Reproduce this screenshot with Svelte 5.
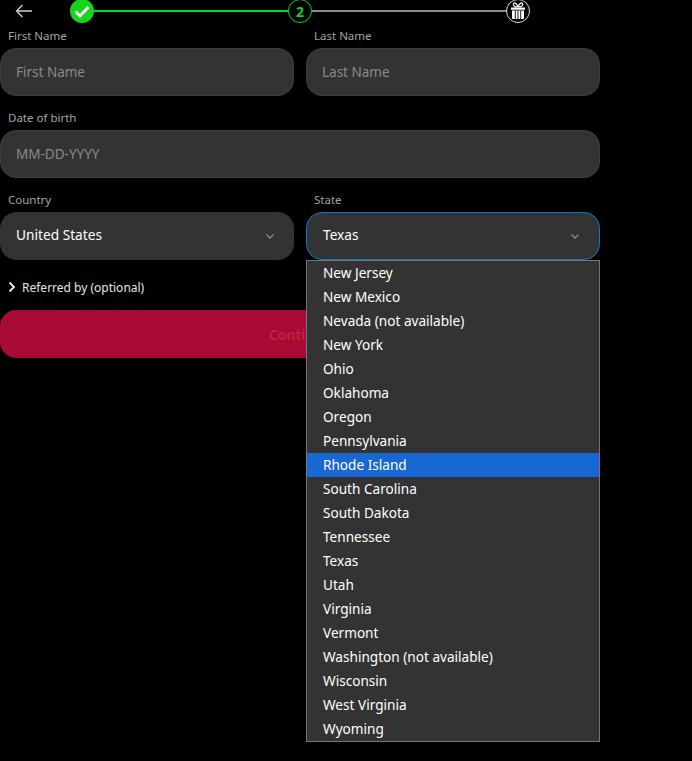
<script>
  const states = ['New Jersey','New Mexico','Nevada (not available)','New York','Ohio','Oklahoma','Oregon','Pennsylvania','Rhode Island','South Carolina','South Dakota','Tennessee','Texas','Utah','Virginia','Vermont','Washington (not available)','Wisconsin','West Virginia','Wyoming'];
</script>

<div class="page">
  <div class="stepper">
    <svg class="back" width="18" height="14" viewBox="0 0 18 14" fill="none" stroke="#d0d0d0" stroke-width="1.400"><path d="M17 7H1.500M7.500 1 1.500 7l6 6"/></svg>
    <div class="track">
      <span class="step done"><svg width="16" height="13" viewBox="0 0 16 13" fill="none" stroke="#fff" stroke-width="2.800"><path d="M1.500 6.500l4.500 4.500 8.500-9"/></svg></span>
      <span class="line green"></span>
      <span class="step current">2</span>
      <span class="line grey"></span>
      <span class="step gift">
        <svg width="18" height="18" viewBox="0 0 18 18" fill="#fff"><rect x="2" y="5.500" width="14" height="2.200"/><path d="M3 8.500h12V16a1 1 0 0 1-1 1H4a1 1 0 0 1-1-1z"/><path d="M8.500 5C6.500 5 3.500 4 4.500 1.800S8 2 8.800 5M9.500 5c2 0 5-1 4-3.200S10 2 9.200 5" fill="none" stroke="#fff" stroke-width="1.200"/><path d="M6.300 8.500V17M9 8.500V17M11.700 8.500V17" stroke="#000" stroke-width=".9"/></svg>
      </span>
    </div>
  </div>

  <div class="row">
    <div class="field"><span class="lbl">First Name</span><div class="box ph">First Name</div></div>
    <div class="field"><span class="lbl">Last Name</span><div class="box ph">Last Name</div></div>
  </div>
  <div class="row single">
    <div class="field"><span class="lbl">Date of birth</span><div class="box ph">MM-DD-YYYY</div></div>
  </div>
  <div class="row">
    <div class="field"><span class="lbl">Country</span>
      <div class="box sel">United States
        <svg class="chev" width="8" height="5" viewBox="0 0 8 5" fill="none" stroke="#8a8a8a" stroke-width="1.300"><path d="M.5.500 4 4 7.500.500"/></svg>
      </div>
    </div>
    <div class="field"><span class="lbl">State</span>
      <div class="box sel focus">Texas
        <svg class="chev" width="8" height="5" viewBox="0 0 8 5" fill="none" stroke="#8a8a8a" stroke-width="1.300"><path d="M.5.500 4 4 7.500.500"/></svg>
      </div>
      <ul class="menu">
        {#each states as s}
          <li class:hl={s === 'Rhode Island'}>{s}</li>
        {/each}
      </ul>
    </div>
  </div>

  <div class="ref">
    <svg width="8" height="12" viewBox="0 0 8 12" fill="none" stroke="#f2f2f2" stroke-width="1.800"><path d="M1.500 1.500 6 6l-4.500 4.500"/></svg>
    <span>Referred by (optional)</span>
  </div>
  <button class="cta">Continue</button>
</div>

<style>
  :global(body) { margin: 0; background: #000; }
  .page { width: 600px; height: 761px; font-family: "Noto Sans", sans-serif; color: #fff; overflow: visible; }
  .stepper { position: relative; height: 22px; }
  .back { position: absolute; left: 15px; top: 4px; }
  .track { position: absolute; left: 70px; top: -1px; width: 460px; display: flex; align-items: center; }
  .step { width: 24px; height: 24px; box-sizing: border-box; border-radius: 50%; display: flex; align-items: center; justify-content: center; flex: none; }
  .done { background: #17d517; }
  .current { border: 1.500px solid #17d517; color: #17d517; font-size: 14px; font-weight: 700; }
  .gift { border: 1.500px solid #ddd; }
  .line { flex: 1; height: 2px; }
  .green { background: #17d517; }
  .grey { background: #8c8c8c; }
  .row { display: grid; grid-template-columns: 294px 294px; column-gap: 12px; margin-top: 6px; }
  .row.single { grid-template-columns: 600px; margin-top: 14px; }
  .row:nth-of-type(4) { margin-top: 14px; }
  .field { position: relative; display: flex; flex-direction: column; }
  .lbl { font-size: 11.500px; line-height: 16px; height: 20px; color: #a3a3a3; padding-left: 8px; }
  .box { height: 48px; box-sizing: border-box; border-radius: 16px; background: #333; border: 1px solid #3f3f3f; padding: 0 15px 1px; display: flex; align-items: center; font-size: 13.500px; }
  .ph { color: #8a8a8a; }
  .sel { position: relative; color: #fff; border-color: #333; padding-bottom: 3px; font-size: 13.700px; font-weight: 440; }
  .focus { border-color: #0a7cc4; padding-left: 16px; }
  .chev { position: absolute; right: 19px; top: 21px; }
  .focus .chev { right: 20px; }
  .menu { position: absolute; left: 0; top: 68px; width: 294px; box-sizing: border-box; margin: 0; padding: 0; list-style: none; background: #333; border: 1px solid #757575; z-index: 2; }
  .menu li { height: 24px; line-height: 24px; padding-left: 16px; font-size: 13.600px; font-weight: 440; color: #fff; }
  .menu li.hl { background: #1967d2; }
  .ref { display: flex; align-items: center; gap: 6px; height: 16px; margin-top: 19px; padding-left: 8px; font-size: 12px; font-weight: 440; color: #e6e6e6; }
  .cta { display: block; width: 600px; height: 48px; margin-top: 15px; border: 0; border-radius: 16px; background: #a60a35; color: #c4233f; font: 600 14px "Noto Sans", sans-serif; }
</style>
